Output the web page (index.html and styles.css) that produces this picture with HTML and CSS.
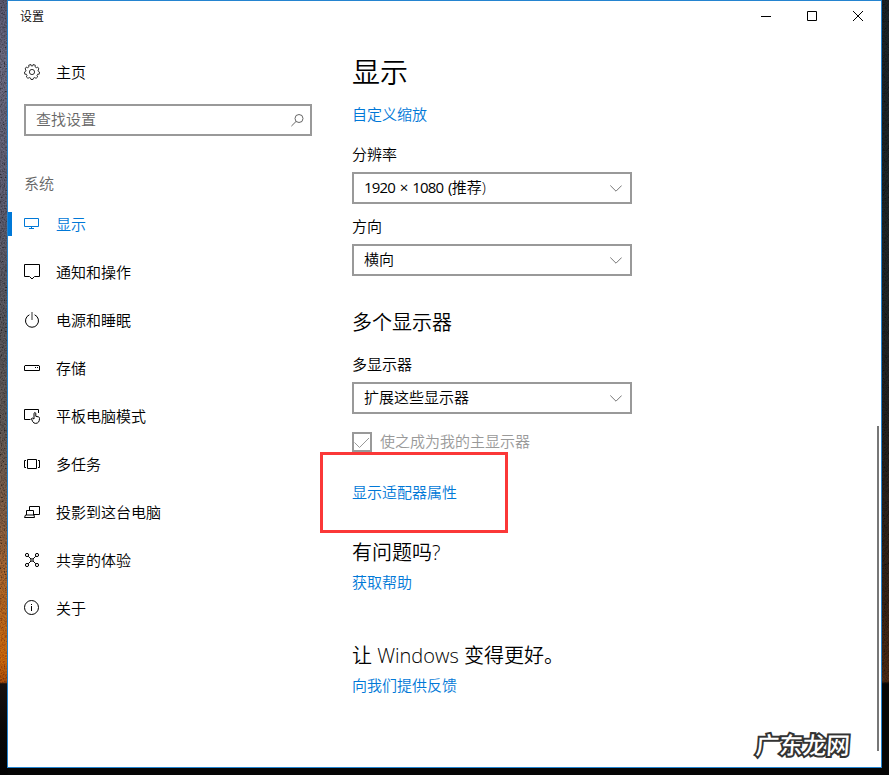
FILE: index.html
```
<!DOCTYPE html>
<html lang="zh-CN">
<head>
  <meta charset="UTF-8" />
  <meta name="viewport" content="width=device-width, initial-scale=1.0" />
  <title>设置</title>
  <link rel="stylesheet" href="styles.css">
</head>
<body>
  <svg class="grain" width="889" height="775">
    <filter id="noise" x="0" y="0" width="100%" height="100%">
      <feTurbulence type="fractalNoise" baseFrequency="0.7" numOctaves="2" />
      <feColorMatrix values="1.6 0 0 0 -.36  1.6 0 0 0 -.36  1.6 0 0 0 -.36  0 0 0 0 1" />
    </filter>
    <rect width="7" height="683" filter="url(#noise)" />
    <rect x="882" width="7" height="683" filter="url(#noise)" />
  </svg>

  <div class="window">
    <header class="titlebar">
      <span class="caption">设置</span>
      <div class="controls">
        <button><svg width="10" height="10"><path d="M0 5.5H10" /></svg></button>
        <button><svg width="10" height="10"><path d="M.5 .5H9.5V9.5H.5Z" /></svg></button>
        <button><svg width="10" height="10"><path d="M0 0L10 10M10 0L0 10" /></svg></button>
      </div>
    </header>

    <div class="content">
      <aside class="sidebar">
        <a class="item">
          <svg class="icon" viewBox="0 0 16 16"><path stroke-width=".8" d="M6.9 .5L7.2 1.9H8.8L9.1 .5L11.3 1.2L11 2.7L12.4 3.7L13.6 3L15 5L14 6L14.2 7.2L15.5 8L15.2 10.2L13.7 10.2L13 11.6L13.7 12.9L12 14.4L10.8 13.5L9.5 14L9 15.5H7L6.5 14L5.2 13.5L4 14.4L2.3 12.9L3 11.6L2.3 10.2L.8 10.2L.5 8L1.8 7.2L2 6L1 5L2.4 3L3.6 3.7L5 2.7L4.7 1.2Z" /><circle stroke-width=".8" cx="8" cy="8" r="2.6" /></svg>
          主页
        </a>
        <div class="search">
          <span>查找设置</span>
          <svg width="13" height="13"><circle cx="8" cy="4.5" r="4" /><path d="M5 7.5L.4 12.1" /></svg>
        </div>
        <div class="group">系统</div>
        <nav>
          <a class="item active">
            <svg class="icon" viewBox="0 0 16 16"><path d="M.5 2.5H14.5V10.5H.5ZM7.5 10.5V12.5M5 12.5H10" /></svg>
            显示
          </a>
          <a class="item">
            <svg class="icon" viewBox="0 0 16 16"><path d="M.5 .5H15.5V12.5H10.5L8 15L5.5 12.5H.5Z" /></svg>
            通知和操作
          </a>
          <a class="item">
            <svg class="icon" viewBox="0 0 16 16"><path d="M5.4 2.8A6.5 6.5 0 1 0 10.6 2.8" /><path class="stem" d="M8 0V8" /></svg>
            电源和睡眠
          </a>
          <a class="item">
            <svg class="icon" viewBox="0 0 16 16"><path d="M1 5.5H15L15.5 6V10.5H.5V6ZM11 7.5H12M13 7.5H14" /></svg>
            存储
          </a>
          <a class="item">
            <svg class="icon" viewBox="0 0 16 16"><path d="M6.5 11.5H.5V1.5H14.5V5" /><path d="M10 11V5.2Q10.9 3.8 11.8 5.2V8.3L14.6 8.9Q15.6 9.2 15.5 10.5Q15.4 15.3 11.6 15.4Q9.6 15.4 8.7 13.6L7.4 10.6Q8.2 9.4 10 11" /></svg>
            平板电脑模式
          </a>
          <a class="item">
            <svg class="icon" viewBox="0 0 16 16"><path d="M3.5 3.5H12.5V12.5H3.5ZM2 4.5H.5V11.5H2M14 4.5H15.5V11.5H14" /></svg>
            多任务
          </a>
          <a class="item">
            <svg class="icon" viewBox="0 0 16 16"><path d="M5.5 6V2.5H15.5V10.5H10M2.5 11V6.5H9.5V11M1.5 11L.5 13.5H10.5L10 11Z" /></svg>
            投影到这台电脑
          </a>
          <a class="item">
            <svg class="icon" viewBox="0 0 16 16"><path d="M4.2 4.2L7 7M11.8 4.2L9 7M4.2 11.8L7 9M11.8 11.8L9 9" /><circle cx="3" cy="3" r="1.6" /><circle cx="13" cy="3" r="1.6" /><circle cx="3" cy="13" r="1.6" /><circle cx="13" cy="13" r="1.6" /><circle cx="8" cy="8" r="1.3" /></svg>
            共享的体验
          </a>
          <a class="item">
            <svg class="icon" viewBox="0 0 16 16"><circle cx="7.5" cy="7.5" r="7" /><path d="M7.5 6V11M7.5 4V5" /></svg>
            关于
          </a>
        </nav>
      </aside>

      <main class="main">
        <h1>显示</h1>
        <a class="link scale">自定义缩放</a>

        <div class="label">分辨率</div>
        <div class="select"><span><span class="resolution">1920 × 1080 (</span>推荐)</span><svg width="12" height="7"><path d="M.3 .5L6 6.2L11.7 .5" /></svg></div>
        <div class="label second">方向</div>
        <div class="select">横向<svg width="12" height="7"><path d="M.3 .5L6 6.2L11.7 .5" /></svg></div>

        <h2 class="multi">多个显示器</h2>
        <div class="label">多显示器</div>
        <div class="select">扩展这些显示器<svg width="12" height="7"><path d="M.3 .5L6 6.2L11.7 .5" /></svg></div>
        <div class="check">
          <span class="box"><svg width="16" height="16"><path d="M.5 8.5L5.5 13.5L15 4" /></svg></span>
          <span class="check-text">使之成为我的主显示器</span>
        </div>
        <a class="link adapter">显示适配器属性<span class="highlight"></span></a>

        <h2 class="question">有问题吗?</h2>
        <a class="link">获取帮助</a>

        <h2 class="better">让 Windows 变得更好。</h2>
        <a class="link">向我们提供反馈</a>
      </main>
    </div>

    <div class="scrollbar"></div>
    <div class="watermark">广东龙网</div>
  </div>
</body>
</html>
```
FILE: styles.css
```
* {
  box-sizing: border-box;
}
body {
  margin: 0;
  height: 775px;
  overflow: hidden;
  font-family: "Open Sans", "Noto Sans CJK SC", sans-serif;
  font-size: 15px;
  font-weight: 350;
  color: #000;
  background:
    linear-gradient(#454457 0, #535264 60px, #484858 200px, #444347 330px, #4b4542 430px, #674a35 520px, #8c501f 590px, #b45308 660px, #8a3d08 682px, #17110f 684px, #080808 730px, #030303 775px) left / 8px 100% no-repeat,
    linear-gradient(#141b1d 0, #171c1d 300px, #1b1916 450px, #2a1b10 600px, #3b200f 681px, #050505 684px) right / 8px 100% no-repeat,
    #050505;
}
svg {
  display: block;
  flex: none;
  fill: none;
  stroke: currentColor;
}
.grain {
  position: absolute;
  left: 0;
  top: 0;
  opacity: 0.45;
  mix-blend-mode: overlay;
}
.window {
  position: relative;
  width: 875px;
  height: 768px;
  margin-left: 7px;
  background: #fff;
  border: 1px solid #2484d0;
}
.titlebar {
  display: flex;
  justify-content: space-between;
  height: 31px;
  padding-left: 12px;
  font-size: 12px;
  line-height: 31px;
}
.controls {
  display: flex;
}
.controls button {
  display: flex;
  align-items: center;
  justify-content: center;
  width: 46px;
  height: 30px;
  padding: 0;
  border: none;
  background: none;
  color: #000;
}
.content {
  display: flex;
}
.sidebar {
  width: 320px;
  padding-top: 16px;
}
.item {
  display: flex;
  align-items: center;
  gap: 16px;
  height: 48px;
  padding: 0 0 2px 16px;
}
.icon {
  width: 16px;
  height: 16px;
  margin-top: 2px;
}
.stem {
  stroke: #999;
  stroke-width: 2;
}
.active {
  color: #0078d7;
  background: linear-gradient(#0078d7, #0078d7) 0 12px / 4px 24px no-repeat;
}
.search {
  display: flex;
  align-items: center;
  justify-content: space-between;
  width: 288px;
  height: 32px;
  margin: 8px 0 0 16px;
  padding: 0 6px 3px 10px;
  border: 2px solid #999;
  color: #666;
}
.search svg {
  margin-top: 3px;
}
.group {
  height: 64px;
  padding: 37px 0 0 16px;
  line-height: 20px;
  color: #666;
}
.main {
  padding-left: 24px;
}
h1 {
  margin: 20px 0 0;
  font-size: 28px;
  font-weight: 350;
  line-height: 40px;
}
h2 {
  margin: 0 0 5px;
  font-size: 20px;
  font-weight: 350;
  line-height: 28px;
}
.link {
  display: block;
  line-height: 20px;
  color: #0078d7;
}
.scale {
  margin: 12px 0 20px;
}
.label {
  margin-bottom: 8px;
  line-height: 20px;
}
.second {
  margin-top: 12px;
}
.select {
  display: flex;
  align-items: center;
  justify-content: space-between;
  width: 280px;
  height: 32px;
  padding: 0 8px 3px 10px;
  border: 2px solid #999;
}
.select svg {
  margin-top: 3px;
  color: #777;
}
.resolution {
  font-weight: 400;
  letter-spacing: -0.8px;
  word-spacing: 1.6px;
}
.multi {
  margin: 33px 0 17px;
}
.check {
  display: flex;
  gap: 8px;
  height: 20px;
  margin: 18px 0 30px;
  color: #999;
}
.check-text {
  line-height: 18px;
}
.box {
  width: 20px;
  height: 20px;
  border: 2px solid #999;
}
.adapter {
  position: relative;
}
.highlight {
  position: absolute;
  left: -32px;
  top: -30px;
  width: 188px;
  height: 81px;
  border: 3px solid #fb3838;
}
.question {
  margin-top: 37px;
}
.better {
  margin-top: 50px;
}
.scrollbar {
  position: absolute;
  right: 2px;
  top: 425px;
  width: 2px;
  height: 325px;
  background: #777;
}
.watermark {
  position: absolute;
  right: 31px;
  bottom: 9px;
  font-size: 23.5px;
  font-weight: 500;
  line-height: 26px;
  color: #fff;
  -webkit-text-stroke: 4px #333;
  paint-order: stroke fill;
  transform: skewX(-4deg);
}
```
